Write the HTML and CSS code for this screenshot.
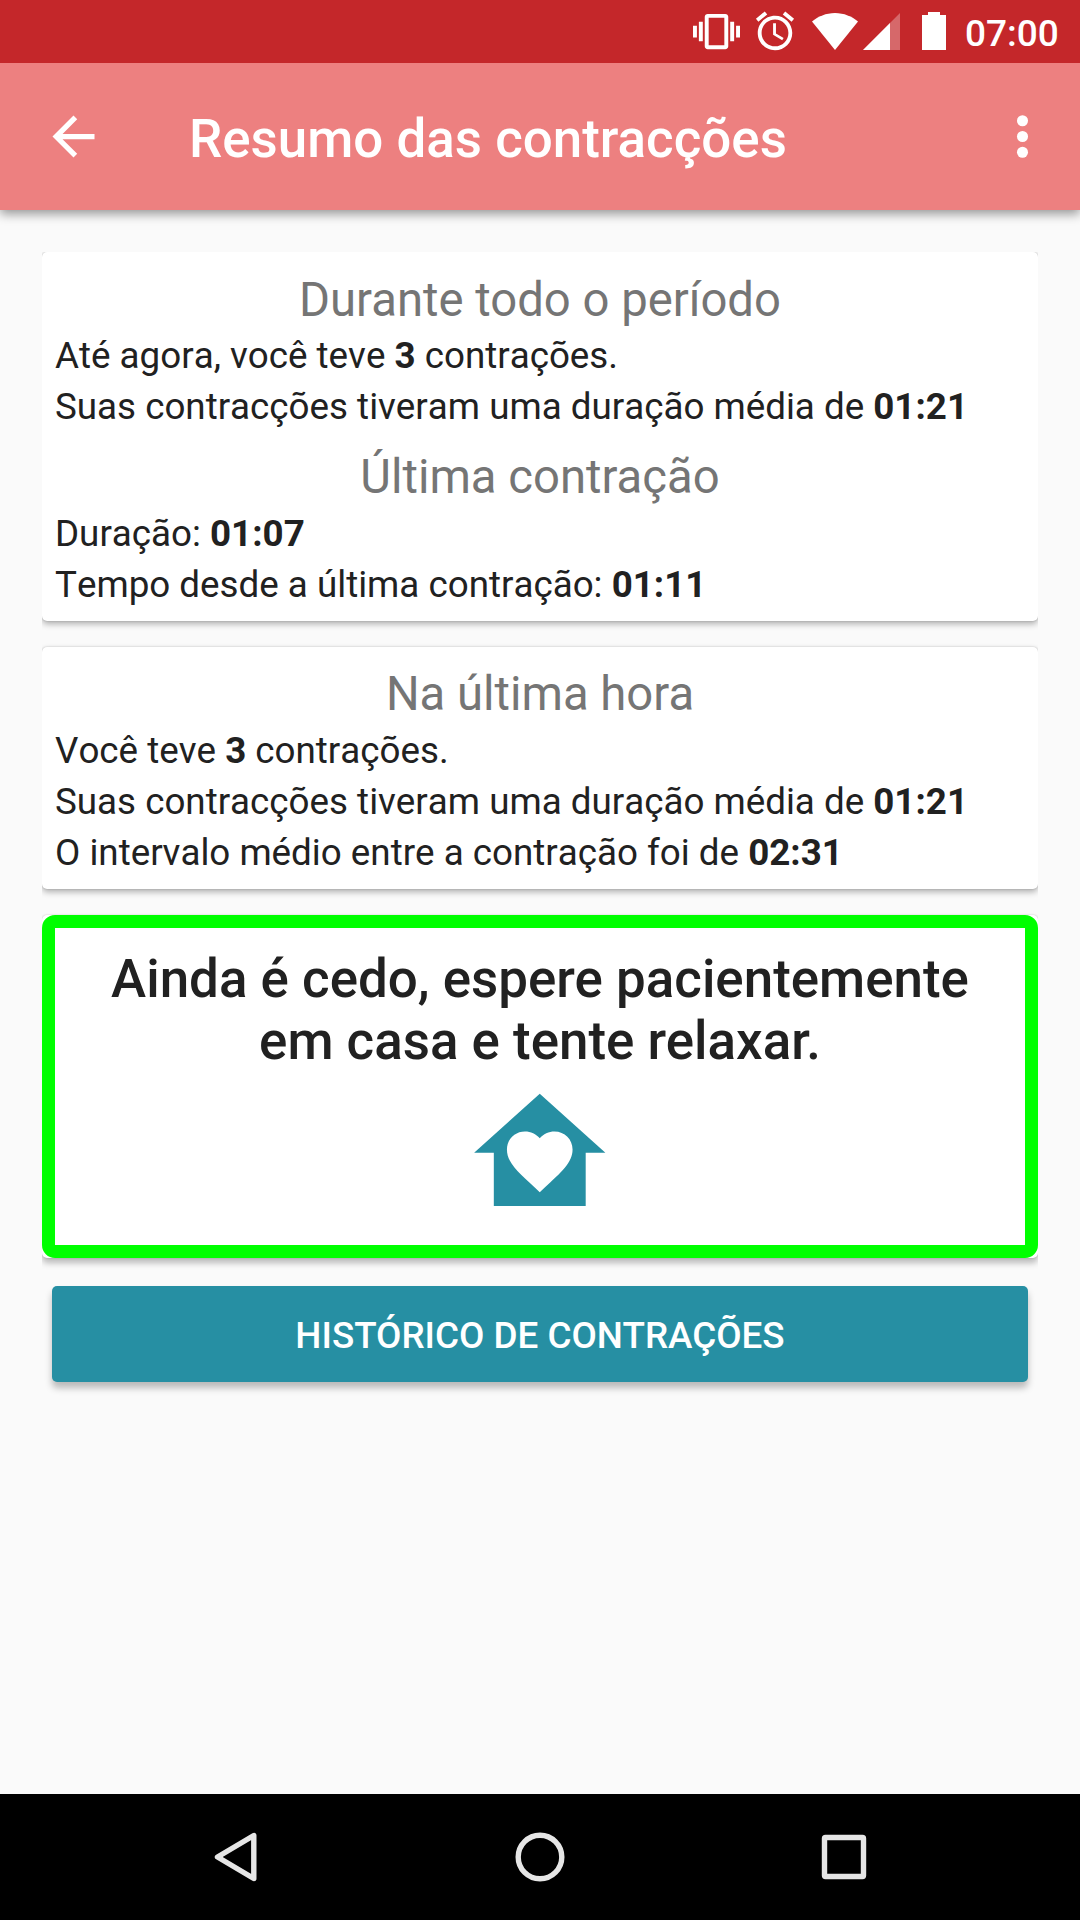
FILE: index.html
```html
<!DOCTYPE html>
<html lang="pt">
<head>
    <meta charset="UTF-8">
    <meta name="viewport" content="width=device-width, initial-scale=1.0">
    <title>Resumo das contracções</title>
    <link rel="stylesheet" href="styles.css">
</head>
<body>

    <div class="status-bar">
        <svg class="vibrate" width="47" height="47" viewBox="0 0 24 24"><path d="M0 15h2V9H0v6zm3 2h2V7H3v10zm19-8v6h2V9h-2zm-3 8h2V7h-2v10zM16.5 3h-9C6.67 3 6 3.67 6 4.5v15c0 .83.67 1.5 1.5 1.5h9c.83 0 1.5-.67 1.5-1.5v-15c0-.83-.67-1.5-1.5-1.5zM16 19H8V5h8v14z"/></svg>
        <svg class="alarm" width="46" height="46" viewBox="0 0 24 24"><path d="M12.5 8H11v6l4.75 2.85.75-1.23-4-2.37V8zm4.837-6.19l4.607 3.845-1.28 1.535-4.61-3.843zm-10.674 0l1.282 1.536L3.337 7.19l-1.28-1.536zM12 4c-4.97 0-9 4.03-9 9s4.03 9 9 9 9-4.03 9-9-4.03-9-9-9zm0 16c-3.87 0-7-3.13-7-7s3.13-7 7-7 7 3.13 7 7-3.13 7-7 7z"/></svg>
        <svg class="wifi" width="46" height="37" viewBox="0 0 46 37"><path d="M23 37L0 8.500C6 3.500 14 0 23 0s17 3.500 23 8.500z"/></svg>
        <svg class="signal" width="37" height="37" viewBox="0 0 37 37"><path d="M0 37L37 0v37z" opacity=".3"/><path d="M0 37L27 10v27z"/></svg>
        <svg class="battery" width="24" height="38" viewBox="0 0 24 38"><path d="M0 3h6V0h12v3h6v35H0z"/></svg>
        <span class="clock">07:00</span>
    </div>

    <div class="app-bar">
        <svg width="63" height="63" viewBox="0 0 24 24"><path d="M20 11H7.830l5.590-5.590L12 4l-8 8 8 8 1.410-1.410L7.830 13H20v-2z"/></svg>
        <h1>Resumo das contracções</h1>
        <svg width="63" height="63" viewBox="0 0 24 24"><circle cx="12" cy="6" r="2.100"/><circle cx="12" cy="12" r="2.100"/><circle cx="12" cy="18" r="2.100"/></svg>
    </div>

    <div class="content">
        <div class="card card-total">
            <h2>Durante todo o período</h2>
            <p>Até agora, você teve <b>3</b> contrações.</p>
            <p>Suas contracções tiveram uma duração média de <b>01:21</b></p>
            <h2>Última contração</h2>
            <p>Duração: <b>01:07</b></p>
            <p>Tempo desde a última contração: <b>01:11</b></p>
        </div>

        <div class="card card-hour">
            <h2>Na última hora</h2>
            <p>Você teve <b>3</b> contrações.</p>
            <p>Suas contracções tiveram uma duração média de <b>01:21</b></p>
            <p>O intervalo médio entre a contração foi de <b>02:31</b></p>
        </div>

        <div class="card card-advice">
            <div class="advice">
                <h3>Ainda é cedo, espere pacientemente<br>em casa e tente relaxar.</h3>
                <svg width="157.500" height="157.500" viewBox="0 0 24 24"><path fill-rule="evenodd" d="M12 3L2 12h3v8.100h14v-8.100h3L12 3zm0 15l-.72-.66C8.700 14.950 7 13.500 7 11.500c0-1.550 1.200-2.750 2.750-2.750.87 0 1.700.4 2.250 1.050.55-.65 1.380-1.050 2.250-1.050 1.550 0 2.750 1.200 2.750 2.750 0 2-1.700 3.450-4.280 5.840z"/></svg>
            </div>
        </div>

        <button class="history-btn">HISTÓRICO DE CONTRAÇÕES</button>
    </div>

    <div class="nav-bar">
        <svg width="50" height="50" viewBox="0 0 50 50"><path d="M42.800 3.500v43L6.500 25z"/></svg>
        <svg width="50" height="50" viewBox="0 0 50 50"><circle cx="25" cy="25" r="21.800"/></svg>
        <svg width="50" height="50" viewBox="0 0 50 50"><rect x="5.500" y="5.500" width="39" height="39" rx="1"/></svg>
    </div>

</body>
</html>
```
FILE: styles.css
```css
* {
    margin: 0;
    padding: 0;
    box-sizing: border-box;
    font-family: Roboto, sans-serif;
}

body {
    display: flex;
    flex-direction: column;
    height: 1920px;
    background-color: #fafafa;
    color: #212121;
    overflow: hidden;
}

svg {
    display: block;
    flex-shrink: 0;
    fill: white;
}

/* status bar */
.status-bar {
    display: flex;
    justify-content: flex-end;
    align-items: flex-start;
    height: 63px;
    padding-right: 21px;
    background-color: #c4272a;
    color: white;
    z-index: 1;
}

.vibrate {
    margin-top: 8px;
}

.alarm {
    margin: 8px 0 0 12px;
}

.wifi {
    margin: 13px 0 0 14px;
}

.signal {
    margin: 13px 0 0 5px;
}

.battery {
    margin: 12px 0 0 22px;
}

.clock {
    width: 94px;
    margin: 12px 0 0 19px;
    font-size: 37px;
    font-weight: 500;
    line-height: 44px;
}

/* toolbar */
.app-bar {
    display: flex;
    align-items: center;
    height: 147px;
    padding: 0 26px 0 42px;
    background-color: #ed8080;
    color: white;
    box-shadow: 0 4px 10px rgba(0, 0, 0, 0.4);
}

.app-bar h1 {
    flex: 1;
    margin-left: 84px;
    padding-top: 5px;
    font-size: 52.9px;
    font-weight: 500;
}

/* cards */
.content {
    margin: 42px 42px 0;
    padding-bottom: 30px;
    overflow: hidden;
}

.card {
    margin-bottom: 26px;
    padding: 19px 13px 0;
    background-color: white;
    border-radius: 5px;
    box-shadow: 0 3px 6px rgba(0, 0, 0, 0.3), 0 0 2px rgba(0, 0, 0, 0.2);
}

.card h2 {
    margin-bottom: 1px;
    color: #757575;
    font-size: 47.25px;
    font-weight: 400;
    line-height: 58px;
    text-align: center;
}

.card p {
    font-size: 36.75px;
    line-height: 51px;
    font-kerning: none;
}

.card p + h2 {
    margin: 16px 0 2px;
}

.card-total {
    height: 369px;
}

.card-hour {
    height: 242px;
    padding-top: 18px;
}

.card-hour h2 {
    margin-bottom: 2px;
}

.card-advice {
    height: 343px;
    padding: 0;
    box-shadow: 0 5px 6px rgba(0, 0, 0, 0.26), 0 0 2px rgba(0, 0, 0, 0.2);
}

.advice {
    display: flex;
    flex-direction: column;
    align-items: center;
    height: 100%;
    padding-top: 20px;
    border: 13px solid #00ff00;
    border-radius: 13px;
}

.advice h3 {
    font-size: 52.9px;
    font-weight: 500;
    line-height: 62px;
    text-align: center;
}

.advice svg {
    margin-top: 2px;
    fill: #268fa3;
}

.history-btn {
    display: block;
    width: 976px;
    height: 96px;
    margin: 28px auto 0;
    padding-top: 3px;
    background: #268fa3;
    border: none;
    border-radius: 5px;
    color: white;
    font-size: 36.8px;
    font-weight: 500;
    box-shadow: 0 6px 7px rgba(0, 0, 0, 0.26);
}

/* navigation bar */
.nav-bar {
    display: flex;
    justify-content: center;
    gap: 254px;
    height: 126px;
    margin-top: auto;
    padding-top: 38px;
    background-color: black;
}

.nav-bar svg {
    fill: none;
    stroke: #e6e6e6;
    stroke-width: 5.4;
    stroke-linejoin: round;
}
```
